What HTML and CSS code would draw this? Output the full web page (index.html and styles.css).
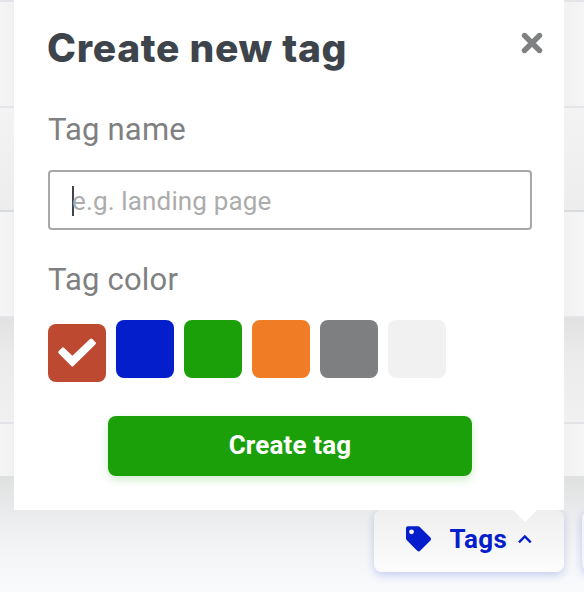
FILE: index.html
```html
<!DOCTYPE html>
<html lang="en">
<head>
  <meta charset="UTF-8" />
  <meta name="viewport" content="width=device-width, initial-scale=1.0" />
  <title>Create new tag</title>
  <link rel="stylesheet" href="styles.css">
</head>
<body>
  <div class="page">
    <div class="list">
      <div class="row"></div>
      <div class="row row-second"></div>
      <div class="row"></div>
      <div class="row row-shaded"></div>
      <div class="row row-last"></div>
    </div>

    <footer class="toolbar">
      <button class="tags-button" type="button">
        <svg class="tag-icon" width="28" height="28" viewBox="0 0 28 28">
          <path fill-rule="evenodd" d="M3 1H13.3Q14.5 1 15.4 1.9L26 12.5Q27.5 14 26 15.5L15.5 26Q14 27.5 12.5 26L1.9 15.4Q1 14.5 1 13.3V3Q1 1 3 1ZM6.7 4.2A2.5 2.5 0 1 0 6.7 9.2A2.5 2.5 0 1 0 6.7 4.2Z" />
        </svg>
        <span>Tags</span>
        <svg class="caret-icon" width="14" height="10" viewBox="0 0 14 10">
          <path d="M1 8.5L7 2.3L13 8.5" />
        </svg>
      </button>
      <div class="next-button"></div>
    </footer>

    <section class="popover">
      <header>
        <h1>Create new tag</h1>
        <button class="close" type="button" aria-label="Close">
          <svg width="22" height="22" viewBox="0 0 22 22">
            <path d="M3.5 3.5L18.5 18.5M18.5 3.5L3.5 18.5" />
          </svg>
        </button>
      </header>

      <form class="tag-form">
        <label for="name">Tag name</label>
        <div class="field">
          <span class="cursor"></span>
          <input type="text" id="name" name="name" placeholder="e.g. landing page" />
        </div>

        <label>Tag color</label>
        <div class="colors">
          <span class="color red">
            <svg width="38" height="30" viewBox="0 0 38 30">
              <path d="M1 12.7L4 9.7Q5 8.7 6 9.7L14.4 17.8L32 1.1Q33.2 0 34.3 1.1L37.3 4.1Q38.5 5.3 37.3 6.5L15.5 28Q14.4 29 13.3 28L.8 15.4Q-.5 14 1 12.7Z" />
            </svg>
          </span>
          <span class="color blue"></span>
          <span class="color green"></span>
          <span class="color orange"></span>
          <span class="color gray"></span>
          <span class="color light"></span>
        </div>

        <button class="submit" type="button">Create tag</button>
      </form>
    </section>
  </div>
</body>
</html>
```
FILE: styles.css
```css
* {
  margin: 0;
  padding: 0;
  box-sizing: border-box;
}

body {
  font-family: Roboto, "Liberation Sans", sans-serif;
  background-color: #f8fafc;
  overflow: hidden;
}

button {
  border: none;
  font-family: inherit;
}

svg {
  display: block;
}

.page {
  position: relative;
  height: 592px;
  overflow: hidden;
}

/* rows behind the popover */
.row {
  height: 106px;
  border-top: 2px solid #e3e5e9;
  background: linear-gradient(to right, #f5f5f5, #f1f1f1 14px, #f1f1f1 564px, #f5f5f5);
}

.row-second {
  height: 104px;
  background: linear-gradient(#f3f3f3, #ededed);
}

.row-second + .row {
  border-top-color: #d9dcdf;
}

.row-shaded {
  background: linear-gradient(#e1e1e1, #ebebeb 35%, #f1f1f1);
}

.row-last {
  height: 54px;
}

.toolbar {
  height: 116px;
  padding: 34px 0 0 374px;
  display: flex;
  gap: 18px;
  background: linear-gradient(#dfe0e0, #ebeced 35%, #f5f6f8 72%, #f8fafc);
}

.tags-button {
  flex: none;
  width: 190px;
  height: 62px;
  padding: 0 32px 4px 31px;
  display: flex;
  align-items: center;
  border-radius: 8px;
  background: linear-gradient(#efefef, #fcfcfc);
  box-shadow: 0 3px 8px rgba(0, 30, 200, 0.2);
  color: #041ecb;
  font-size: 26px;
  font-weight: 700;
}

.tags-button span {
  margin: 0 11px 0 17px;
  letter-spacing: 0.4px;
}

.tag-icon {
  fill: #041ecb;
}

.caret-icon {
  fill: none;
  stroke: #041ecb;
  stroke-width: 2.4;
}

.next-button {
  flex: none;
  width: 60px;
  height: 62px;
  border-radius: 8px;
  background-color: #f3f4fa;
  box-shadow: 0 3px 8px rgba(0, 30, 200, 0.2);
}

.popover {
  position: absolute;
  top: 0;
  left: 14px;
  width: 550px;
  height: 510px;
  padding: 24px 23px 0 34px;
  background-color: #fff;
}

.popover::after {
  content: "";
  position: absolute;
  top: 510px;
  left: 499px;
  border: 12px solid transparent;
  border-top-color: #fff;
  border-bottom: none;
}

.popover header {
  display: flex;
  justify-content: space-between;
}

.popover h1 {
  margin-left: -1px;
  font-family: Inter, "Open Sans", sans-serif;
  font-size: 39px;
  font-weight: 800;
  line-height: 48px;
  letter-spacing: 0.7px;
  color: #3e444b;
}

.close {
  width: 22px;
  height: 22px;
  margin-top: 8px;
  margin-right: -2px;
  background: none;
}

.close path {
  stroke: #7f8081;
  stroke-width: 5.4;
  stroke-linecap: round;
}

.tag-form {
  display: flex;
  flex-direction: column;
  padding: 38px 9px 0 0;
}

.tag-form label {
  height: 40px;
  line-height: 40px;
  font-size: 31px;
  letter-spacing: 0.2px;
  color: #7f8081;
}

.field {
  display: flex;
  align-items: center;
  height: 60px;
  margin: 20px 0 30px;
  padding: 2px 22px 0;
  border: 2px solid #a8a8a8;
  border-radius: 4px;
}

.cursor {
  width: 2px;
  height: 30px;
  margin-right: -2px;
  background-color: #3e444b;
}

.field input {
  flex: 1;
  border: none;
  outline: none;
  background: none;
  font-family: inherit;
  font-size: 26px;
  letter-spacing: 0.15px;
}

.field input::placeholder {
  color: #acacac;
}

.colors {
  display: flex;
  gap: 10px;
  height: 62px;
  margin-top: 20px;
}

.color {
  width: 58px;
  height: 58px;
  border-radius: 8px;
}

.red {
  display: flex;
  align-items: center;
  justify-content: center;
  margin-top: 4px;
  background-color: #bd4930;
}

.red svg {
  fill: #fff;
}

.blue {
  background-color: #041ecb;
}

.green {
  background-color: #1ca009;
}

.orange {
  background-color: #f07d26;
}

.gray {
  background-color: #7e7f80;
}

.light {
  background-color: #f1f1f1;
}

.submit {
  align-self: center;
  width: 364px;
  height: 60px;
  margin-top: 34px;
  padding-bottom: 2px;
  border-radius: 8px;
  background-color: #1ca009;
  box-shadow: 0 4px 10px rgba(28, 160, 9, 0.2);
  color: #fff;
  font-size: 26px;
  font-weight: 700;
  letter-spacing: 0.15px;
}
```
